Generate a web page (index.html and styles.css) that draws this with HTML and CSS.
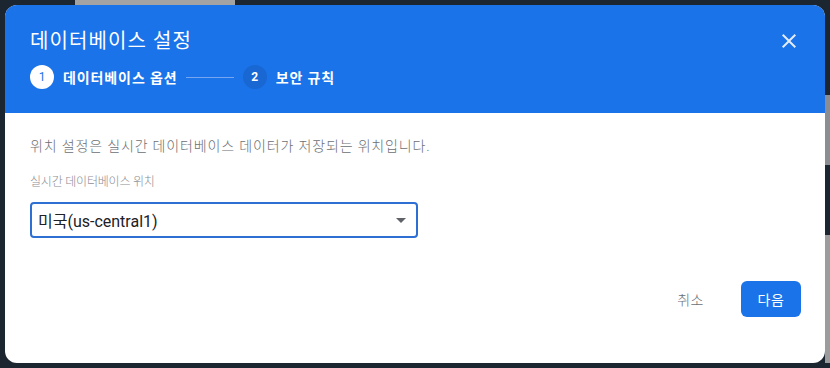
FILE: index.html
```html
<!DOCTYPE html>
<html>
<head>
    <title>데이터베이스 설정</title>
    <link rel="stylesheet" href="styles.css">
</head>
<body>
    <div class="dialog">
        <div class="dialog-header">
            <div class="title-row">
                <h1>데이터베이스 설정</h1>
                <button class="close-btn" aria-label="닫기">
                    <svg width="24" height="24" viewBox="0 0 24 24"><path d="M19 6.41 17.59 5 12 10.59 6.41 5 5 6.41 10.59 12 5 17.59 6.41 19 12 13.41 17.59 19 19 17.59 13.41 12z" fill="currentColor"/></svg>
                </button>
            </div>
            <div class="steps">
                <div class="step active">
                    <span class="step-num">1</span>
                    <span class="step-label">데이터베이스 옵션</span>
                </div>
                <div class="step-line"></div>
                <div class="step">
                    <span class="step-num">2</span>
                    <span class="step-label">보안 규칙</span>
                </div>
            </div>
        </div>
        <div class="dialog-body">
            <p class="intro">위치 설정은 실시간 데이터베이스 데이터가 저장되는 위치입니다.</p>
            <label class="field-label">실시간 데이터베이스 위치</label>
            <div class="select">
                <span>미국(us-central1)</span>
                <span class="arrow"></span>
            </div>
        </div>
        <div class="dialog-footer">
            <button class="btn btn-text">취소</button>
            <button class="btn btn-primary">다음</button>
        </div>
    </div>
</body>
</html>
```

FILE: styles.css
```css
body {
    margin: 0;
    padding: 5px;
    font-family: Roboto, "Noto Sans CJK KR", sans-serif;
    background-color: #1c2631;
    background-image:
        linear-gradient(#9c9c9c, #9c9c9c),
        linear-gradient(#8a8d91, #8a8d91),
        linear-gradient(#a3a3a3, #a3a3a3);
    background-size: 5px 128px, 5px 70px, 160px 5px;
    background-position: right 0 top 235px, right 0 top 95px, 75px 0;
    background-repeat: no-repeat;
}
.dialog {
    width: 820px;
    height: 358px;
    background-color: #fff;
    border-radius: 12px;
    overflow: hidden;
    display: flex;
    flex-direction: column;
}
.dialog-header {
    background-color: #1a73e8;
    height: 108px;
    box-sizing: border-box;
    padding: 22px 24px 0 25px;
    color: #fff;
}
.title-row {
    display: flex;
    align-items: center;
    justify-content: space-between;
    height: 28px;
}
.title-row h1 {
    margin: 0;
    font-size: 20px;
    font-weight: 400;
    line-height: 28px;
    letter-spacing: 1.1px;
}
.close-btn {
    background: none;
    border: none;
    padding: 0;
    color: #e3ecfb;
    width: 24px;
    height: 24px;
    cursor: pointer;
}
.steps {
    display: flex;
    align-items: center;
    margin-top: 10px;
    height: 24px;
}
.step {
    display: flex;
    align-items: center;
}
.step-num {
    width: 24px;
    height: 24px;
    border-radius: 50%;
    background-color: #1967d2;
    color: #fff;
    font-size: 12px;
    font-weight: 700;
    display: flex;
    align-items: center;
    justify-content: center;
}
.step.active .step-num {
    background-color: #fff;
    color: #1a73e8;
    font-weight: 400;
}
.step-label {
    margin-left: 9px;
    font-size: 14px;
    font-weight: 700;
    letter-spacing: 0.9px;
}
.step-line {
    width: 48px;
    height: 1px;
    background-color: #76a6f0;
    margin: 0 9px 0 8px;
}
.dialog-body {
    padding: 23px 25px 0 25px;
}
.intro {
    margin: 0;
    font-size: 14px;
    font-weight: 300;
    line-height: 20px;
    letter-spacing: 0.85px;
    color: #6b6f74;
}
.field-label {
    display: block;
    margin-top: 18px;
    font-size: 12px;
    font-weight: 300;
    line-height: 16px;
    letter-spacing: -0.2px;
    color: #8a8e93;
}
.select {
    margin-top: 12px;
    width: 388px;
    height: 36px;
    box-sizing: border-box;
    border: 2px solid #2e6fd4;
    border-radius: 4px;
    padding: 0 10px 0 6px;
    display: flex;
    align-items: center;
    justify-content: space-between;
    font-size: 16px;
    color: #202124;
}
.arrow {
    width: 0;
    height: 0;
    border-left: 5px solid transparent;
    border-right: 5px solid transparent;
    border-top: 5px solid #5f6368;
}
.dialog-footer {
    display: flex;
    justify-content: flex-end;
    align-items: center;
    padding: 43px 24px 0 0;
}
.btn {
    font-family: inherit;
    font-size: 14px;
    height: 36px;
    border: none;
    border-radius: 6px;
    cursor: pointer;
}
.btn-text {
    background: none;
    color: #6b6f74;
    font-weight: 300;
    padding: 0 16px;
    margin-right: 21px;
    letter-spacing: 0.5px;
}
.btn-primary {
    background-color: #1a73e8;
    color: #fff;
    width: 60px;
    letter-spacing: 0.5px;
}
```
